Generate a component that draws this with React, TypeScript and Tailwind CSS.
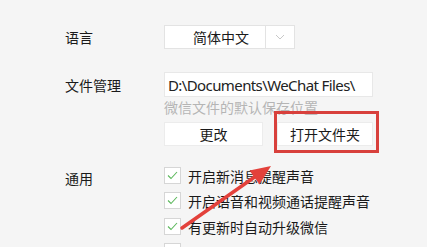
import React from "react";

const cjk = { fontFamily: '"Microsoft YaHei", "Noto Sans CJK SC", "Noto Sans", sans-serif' };

function Check({ checked = true }: { checked?: boolean }) {
  return (
    <div className="w-[17px] h-[17px] bg-white border border-[#d6d6d6] flex items-center justify-center shrink-0">
      {checked && (
        <svg width="11" height="9" viewBox="0 0 11 9">
          <path d="M1 4.5 L4 7.5 L10 1" fill="none" stroke="#5cb85c" strokeWidth="1.1" />
        </svg>
      )}
    </div>
  );
}

export default function App() {
  return (
    <div className="relative w-[427px] h-[247px] bg-[#f5f5f5] overflow-hidden text-[14px] text-[#1a1a1a]" style={cjk}>
      <div className="pt-[25px] pl-[65px] flex flex-col">
        {/* Language */}
        <div className="flex items-center h-[24px]">
          <div className="w-[99px] leading-[16px]">语言</div>
          <div className="flex h-[24px] w-[131px] bg-white border border-[#e3e3e3]">
            <div className="w-[101px] flex items-center justify-center pl-[12px] leading-[16px] border-r border-[#e3e3e3]">简体中文</div>
            <div className="flex-1 flex items-center justify-center">
              <svg width="10" height="6" viewBox="0 0 10 6">
                <path d="M1 1 L5 5 L9 1" fill="none" stroke="#c8c8c8" strokeWidth="1" />
              </svg>
            </div>
          </div>
        </div>

        {/* File management */}
        <div className="flex mt-[23px]">
          <div className="w-[99px] h-[25px] flex items-center leading-[16px]">文件管理</div>
          <div className="flex flex-col">
            <div
              className="w-[209px] h-[25px] bg-white border border-[#e8e8e8] pl-[3px] flex items-center text-[15px] tracking-[-0.6px] leading-[18px] text-[#222] whitespace-nowrap overflow-hidden"
              style={{ fontFamily: '"Segoe UI", "Noto Sans", "Open Sans", sans-serif' }}
            >
              D:\Documents\WeChat Files\
            </div>
            <div className="mt-[2px] h-[16px] leading-[16px] text-[#b5b5b5]">微信文件的默认保存位置</div>
            <div className="flex mt-[7px] gap-[14px]">
              <div className="w-[99px] h-[24px] bg-white border border-[#ececec] flex items-center justify-center leading-[16px]">更改</div>
              <div className="w-[96px] h-[24px] bg-white border border-[#ececec] flex items-center justify-center leading-[16px]">打开文件夹</div>
            </div>
          </div>
        </div>

        {/* General */}
        <div className="flex mt-[21px]">
          <div className="w-[99px] h-[20px] pt-[3px] leading-[16px]">通用</div>
          <div className="flex flex-col">
            <div className="flex items-center gap-[7px] h-[17px]">
              <Check />
              <span className="leading-[16px]">开启新消息提醒声音</span>
            </div>
            <div className="flex items-center gap-[7px] h-[17px] mt-[8px]">
              <Check />
              <span className="leading-[16px]">开启语音和视频通话提醒声音</span>
            </div>
            <div className="flex items-center gap-[7px] h-[17px] mt-[9px]">
              <Check />
              <span className="leading-[16px]">有更新时自动升级微信</span>
            </div>
            <div className="flex items-center gap-[7px] h-[17px] mt-[8px]">
              <Check checked={false} />
            </div>
          </div>
        </div>
      </div>

      {/* Red highlight box */}
      <div className="absolute left-[274px] top-[111px] w-[105px] h-[42px] border-[3px] border-[#d8403c]" />

      {/* Red arrow */}
      <svg className="absolute left-0 top-0" width="427" height="247" viewBox="0 0 427 247">
        <path d="M182 228 L256 176" stroke="#e3413b" strokeWidth="3.5" strokeLinecap="round" />
        <polygon points="271,166 249.5,170.5 259.5,184.5" fill="#e3413b" />
      </svg>
    </div>
  );
}
